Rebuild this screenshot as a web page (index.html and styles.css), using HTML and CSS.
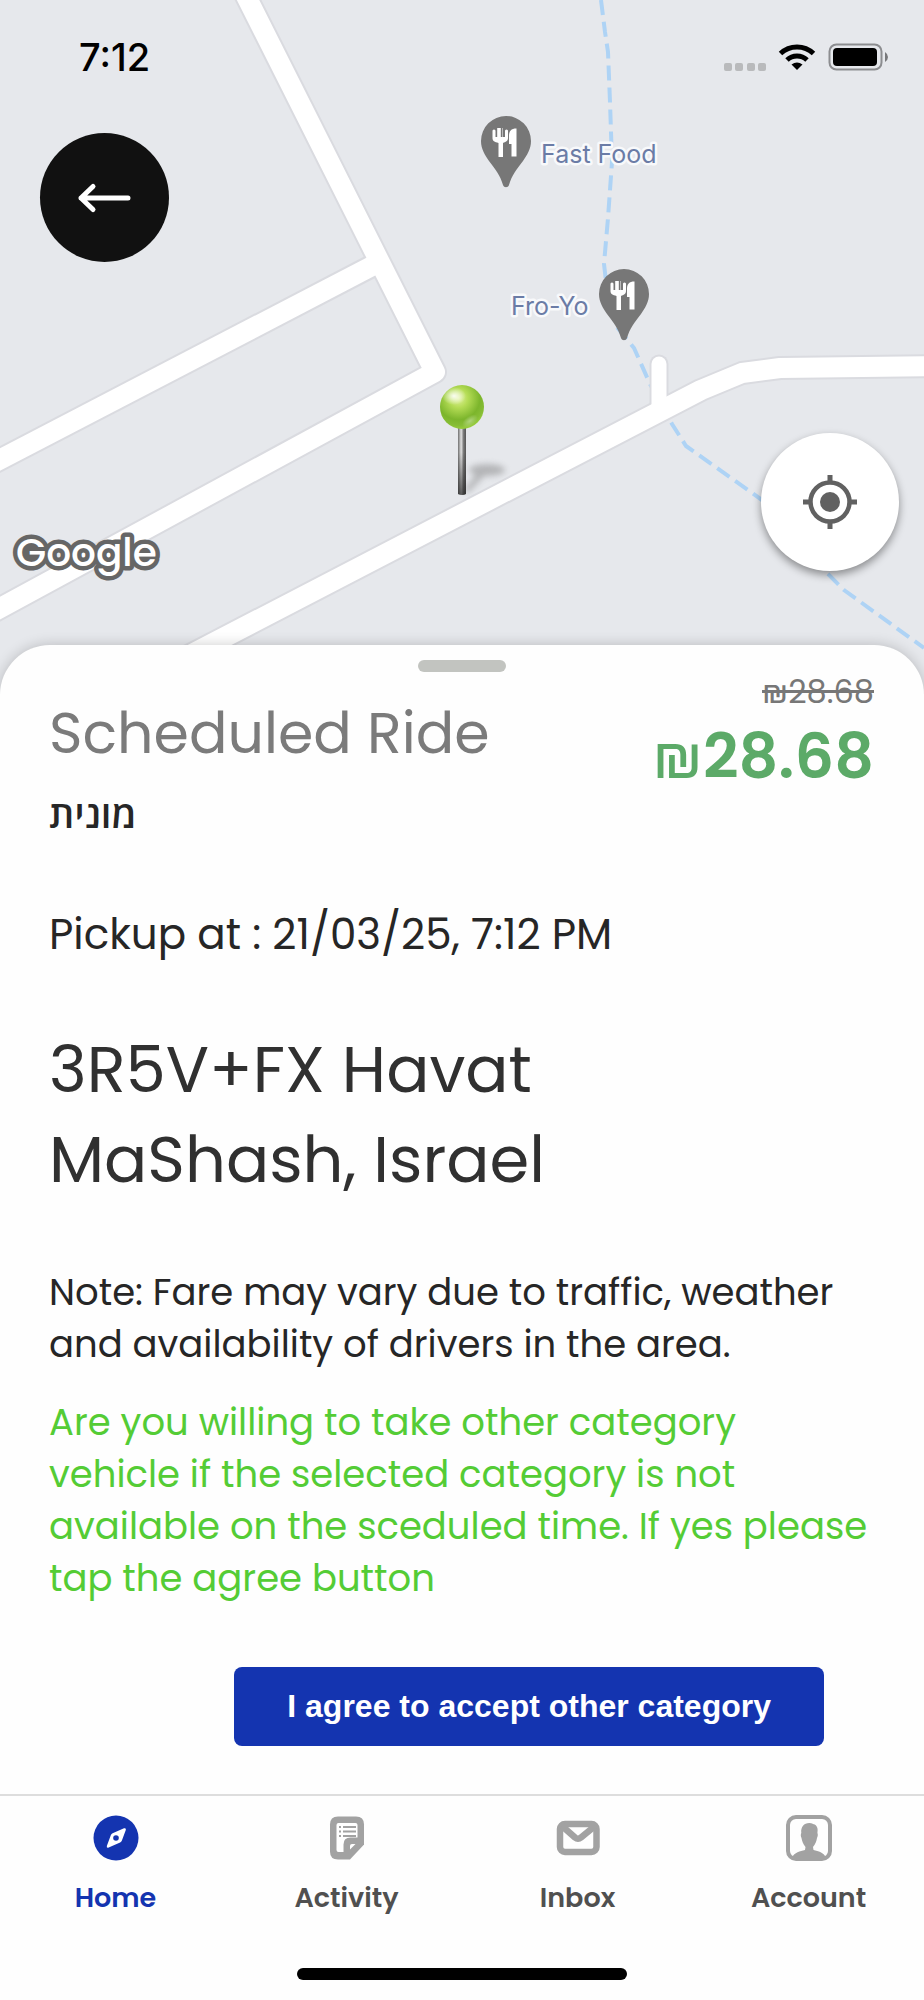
FILE: index.html
```html
<!DOCTYPE html>
<html lang="en">
<head>
<meta charset="utf-8">
<meta name="viewport" content="width=device-width, initial-scale=1">
<title>Scheduled Ride</title>
<link rel="stylesheet" href="styles.css">
</head>
<body>
<div class="screen">
  <section class="map" aria-label="Map">
    <svg class="map-canvas" viewBox="0 0 924 694" aria-hidden="true">
      <defs>
        <radialGradient id="ball" cx="0.42" cy="0.3" r="0.72">
          <stop offset="0" stop-color="#dff19a"/>
          <stop offset="0.3" stop-color="#b4dc55"/>
          <stop offset="0.68" stop-color="#7cb52c"/>
          <stop offset="0.86" stop-color="#86bd35"/>
          <stop offset="1" stop-color="#9bd03f"/>
        </radialGradient>
        <radialGradient id="shine">
          <stop offset="0" stop-color="#ffffff" stop-opacity="0.9"/>
          <stop offset="1" stop-color="#ffffff" stop-opacity="0"/>
        </radialGradient>
        <linearGradient id="shaft">
          <stop offset="0" stop-color="#6f6f6f"/>
          <stop offset="0.4" stop-color="#e2e2e2"/>
          <stop offset="0.7" stop-color="#777777"/>
          <stop offset="1" stop-color="#555555"/>
        </linearGradient>
        <linearGradient id="shaft-dark" x1="0" y1="0" x2="0" y2="1">
          <stop offset="0.4" stop-color="#222222" stop-opacity="0"/>
          <stop offset="1" stop-color="#222222" stop-opacity="0.7"/>
        </linearGradient>
        <filter id="soft" x="-50%" y="-50%" width="200%" height="200%"><feGaussianBlur stdDeviation="3"/></filter>
        <g id="food">
          <path fill="#777777" d="M0-25a25 25 0 0 1 25 25c0 8-4 14-8 20C10 29 6 34 3 44c-1 3-5 3-6 0C-6 34-10 29-17 20c-4-6-8-12-8-20A25 25 0 0 1 0-25z"/>
          <path fill="#ffffff" d="M-13.500-10.500q1.500-2 3 0V-4h1.700v-9h3.600v9h1.700v-9h.5v9H-1v-6.500q1.500-2 3 0V-3c0 3-2.500 4-5 5v14h-4.500V2c-4-1-6-2-6-5zM10.500-12.500v28h-5V3H3v-8c0-5 2-7.500 7.500-7.500z"/>
        </g>
      </defs>
      <path class="river" d="M601 0l4 32 3 20 2 50 2 60-4 56-4 46 3 26 9 36 18 22 16 36 22 40 14 22 76 54 64 72 18 18 80 58"/>
      <g class="road-edge">
        <path class="road" d="M238-20L435 372L-20 619"/>
        <path class="road" d="M-20 470L374 265"/>
        <path class="road" d="M90 707L701 390L742 373L780 368L944 366"/>
        <path class="road lane" d="M659 364V405"/>
      </g>
      <g class="road-fill">
        <path class="road" d="M238-20L435 372L-20 619"/>
        <path class="road" d="M-20 470L374 265"/>
        <path class="road" d="M90 707L701 390L742 373L780 368L944 366"/>
        <path class="road lane" d="M659 364V405"/>
      </g>
      <use href="#food" x="506" y="141"/>
      <use href="#food" x="624" y="294"/>
      <text class="place" x="541" y="163">Fast Food</text>
      <text class="place" x="511" y="315">Fro-Yo</text>
      <g filter="url(#soft)" fill="#777777" opacity="0.45">
        <ellipse cx="487" cy="470" rx="18" ry="6"/>
        <path d="M464 490l14-18 8 2-18 19z"/>
      </g>
      <path fill="url(#shaft)" d="M458 424h8v70q-4 2-8 0z"/>
      <path fill="url(#shaft-dark)" d="M458 424h8v70q-4 2-8 0z"/>
      <circle cx="462" cy="407" r="22" fill="url(#ball)"/>
      <ellipse cx="454" cy="396" rx="12" ry="9" fill="url(#shine)"/>
      <ellipse cx="470" cy="421" rx="9" ry="5" fill="url(#shine)" opacity="0.4" transform="rotate(-35 470 421)"/>
      <text class="brand" x="16" y="566">Google</text>
    </svg>

    <header class="status-bar">
      <span class="clock">7:12</span>
      <svg class="status-icons" width="168" height="30" viewBox="0 0 168 30" aria-hidden="true">
        <g fill="#b9babc">
          <rect x="1" y="21" width="8" height="8" rx="2"/>
          <rect x="12" y="21" width="8" height="8" rx="2"/>
          <rect x="24" y="21" width="8" height="8" rx="2"/>
          <rect x="35" y="21" width="8" height="8" rx="2"/>
        </g>
        <g fill="none" stroke="#000000" stroke-width="5">
          <path d="M57.500 11.500a24 24 0 0 1 33 0"/>
          <path d="M64 18a14.500 14.500 0 0 1 20 0"/>
        </g>
        <path d="M68.500 22.500q5.500-4 11 0L74 28z"/>
        <rect x="106.500" y="2.500" width="52" height="25" rx="7" fill="none" stroke="#8c8d90" stroke-width="2"/>
        <rect x="110" y="6" width="44" height="18" rx="4"/>
        <path fill="#77787a" d="M162 10q3 2 3 5t-3 5z"/>
      </svg>
    </header>

    <button class="round back" type="button" aria-label="Back">
      <svg width="56" height="32" viewBox="0 0 56 32" fill="none" stroke="#ffffff" stroke-width="5" stroke-linecap="round" stroke-linejoin="round"><path d="M51 16H4M16 4.500L4 16l12 11.500"/></svg>
    </button>
    <button class="round locate" type="button" aria-label="My location">
      <svg width="56" height="56" viewBox="0 0 56 56"><circle cx="28" cy="28" r="19.500" fill="none" stroke="#616161" stroke-width="4.500"/><circle cx="28" cy="28" r="10" fill="#616161"/><path d="M28 1v8M28 47v8M1 28h8M47 28h8" stroke="#616161" stroke-width="5"/></svg>
    </button>
  </section>

  <main class="sheet">
    <div class="handle"></div>
    <div class="summary">
      <div class="ride">
        <h1 class="title">Scheduled Ride</h1>
        <p class="vehicle" lang="he">מונית</p>
      </div>
      <div class="fare">
        <del class="old-price">₪28.68</del>
        <strong class="price"><span class="currency">₪</span>28.68</strong>
      </div>
    </div>
    <p class="pickup">Pickup at : 21/03/25, 7:12 PM</p>
    <h2 class="address">3R5V+FX Havat<br>MaShash, Israel</h2>
    <p class="note">Note: Fare may vary due to traffic, weather<br>and availability of drivers in the area.</p>
    <p class="note question">Are you willing to take other category<br>vehicle if the selected category is not<br>available on the sceduled time. If yes please<br>tap the agree button</p>
    <button class="agree" type="button">I agree to accept other category</button>
  </main>

  <nav class="tabs">
    <a class="tab active" href="#home">
      <svg width="48" height="48" viewBox="0 0 48 48"><circle cx="24" cy="24" r="22.500" fill="#1434b0"/><path fill="#ffffff" d="M32 14.300q2.400-.7 1.800 1.800l-4 10.600q-.5 1.300-1.700 1.800l-11.400 5q-2.500.8-1.800-1.800l4-10.600q.5-1.300 1.700-1.800z"/><circle cx="24" cy="24" r="2.800" fill="#1434b0"/></svg>
      <span>Home</span>
    </a>
    <a class="tab" href="#activity">
      <svg width="48" height="48" viewBox="0 0 48 48"><path fill="#a2a2a2" d="M15 2.500h18q8 0 8 8v20L27 45.500H15q-8 0-8-8v-27q0-8 8-8z"/><path fill="#ffffff" d="M15.500 9h17q2 0 2 2v12.500h-7q-7 0-7 7V38h-5q-2 0-2-2V11q0-2 2-2z"/><path d="M16 13h2M20 13h13M16 17.500h2M20 17.500h13M16 22h2M20 22h13" stroke="#a2a2a2" stroke-width="1.800"/><path fill="#ffffff" d="M27 35.500V32q0-2 2-2h3.500z"/></svg>
      <span>Activity</span>
    </a>
    <a class="tab" href="#inbox">
      <svg width="48" height="48" viewBox="0 0 48 48" fill="none" stroke="#a2a2a2" stroke-width="6.500"><rect x="6" y="10" width="36.500" height="28" rx="5"/><path d="M8 12l13 11.500q3 2.500 6 0L41 12"/></svg>
      <span>Inbox</span>
    </a>
    <a class="tab" href="#account">
      <svg width="48" height="48" viewBox="0 0 48 48"><rect x="3" y="3" width="42" height="42" rx="8" fill="none" stroke="#a2a2a2" stroke-width="4"/><path fill="#a2a2a2" d="M20 36l.5-3c-2.500-3-3.500-6-4-9-1-2-.8-4-.2-5-.7-6 2.700-10 8-10 3 0 4 1.500 5.500 1.500 3 2 3.200 5 2.600 8.500.6 1 .6 3-.4 5-.5 3-1.500 6-4 9l.5 3c5 1 10 2.500 12.500 7.500l-2 2H9l-2-2c2.500-5 8-6.500 13-7.500z"/></svg>
      <span>Account</span>
    </a>
  </nav>
  <div class="home-indicator"></div>
</div>
</body>
</html>
```
FILE: styles.css
```css
* {
  box-sizing: border-box;
}

body {
  margin: 0;
  background: #fefefe;
  color: #262626;
  font-family: Poppins, Inter, "Noto Sans", sans-serif;
}

h1,
h2,
p {
  margin: 0;
  font-weight: 400;
}

button {
  border: 0;
  cursor: pointer;
}

.screen {
  display: flex;
  flex-direction: column;
  min-height: 100vh;
}

/* Map */
.map {
  position: relative;
  background: #e6e8ec;
}

.map-canvas {
  display: block;
  width: 100%;
  height: auto;
}

.road {
  fill: none;
  stroke-width: 20px;
  stroke-linejoin: round;
  stroke-linecap: butt;
}

.lane {
  stroke-width: 15px;
  stroke-linecap: round;
}

.road-fill {
  stroke: #ffffff;
}

.road-edge {
  stroke: #dadbe0;
}

.road-edge .road {
  stroke-width: 24px;
}

.road-edge .lane {
  stroke-width: 19px;
}

.river {
  fill: none;
  stroke: #aed3f5;
  stroke-width: 4px;
  stroke-dasharray: 15 7;
}

.place {
  font: 400 25px Inter, sans-serif;
  fill: #6b7ca6;
  stroke: #f8f9fb;
  stroke-width: 5px;
  stroke-linejoin: round;
  paint-order: stroke;
}

.brand {
  font: 500 39px Poppins, Lato, sans-serif;
  fill: #ffffff;
  stroke: #666666;
  stroke-width: 9px;
  stroke-linejoin: round;
  paint-order: stroke;
}

.status-bar {
  position: absolute;
  inset: 0 0 auto;
  display: flex;
  align-items: center;
  justify-content: space-between;
  height: 113px;
  padding: 0 33px 0 79px;
}

.clock {
  color: #000000;
  font: 500 38px Inter, sans-serif;
}

.round {
  position: absolute;
  display: flex;
  align-items: center;
  justify-content: center;
  padding: 0;
  border-radius: 50%;
}

.back {
  top: 133px;
  left: 40px;
  width: 129px;
  height: 129px;
  background: #111111;
}

.locate {
  right: 25px;
  bottom: 123px;
  width: 138px;
  height: 138px;
  background: #ffffff;
  box-shadow: 0 4px 8px rgba(0, 0, 0, 0.4);
}

/* Ride details */
.sheet {
  position: relative;
  display: flex;
  flex: 1;
  flex-direction: column;
  margin-top: -49px;
  padding: 15px 50px 47px 49px;
  border-radius: 50px 50px 0 0;
  background: #fefefe;
  box-shadow: 0 0 14px rgba(0, 0, 0, 0.2);
}

.handle {
  align-self: center;
  width: 88px;
  height: 12px;
  border-radius: 6px;
  background: #c2c4c0;
}

.summary {
  display: flex;
  justify-content: space-between;
}

.ride {
  padding-top: 21px;
}

.title {
  color: #7b7b7b;
  font-size: 57px;
  line-height: 80px;
}

.vehicle {
  font-family: "Open Sans", "DejaVu Sans", sans-serif;
  font-size: 38px;
  font-weight: 600;
  line-height: 80px;
}

.fare {
  display: flex;
  flex-direction: column;
  align-items: flex-end;
}

.old-price {
  color: #777777;
  font-size: 32px;
  line-height: 40px;
}

.price {
  color: #5caa68;
  font-size: 62px;
  font-weight: 600;
  line-height: 90px;
}

.currency {
  font-weight: 400;
}

.pickup {
  margin-top: 52px;
  font-size: 42px;
  line-height: 60px;
}

.address {
  margin-top: 60px;
  color: #303030;
  font-size: 64px;
  line-height: 90px;
}

.note {
  margin-top: 61px;
  font-size: 37px;
  line-height: 52px;
}

.question {
  margin-top: 26px;
  color: #54cc35;
}

.agree {
  align-self: flex-end;
  margin-top: 63px;
  margin-right: 50px;
  padding: 0 53px;
  border-radius: 8px;
  background: #1434b0;
  color: #ffffff;
  font: 700 32px/79px "Liberation Sans", Arial, sans-serif;
}

/* Bottom navigation */
.tabs {
  position: relative;
  display: grid;
  grid-template-columns: repeat(4, 1fr);
  border-top: 2px solid #dddddd;
  padding: 18px 0 50px;
  background: #fefefe;
}

.tab {
  display: flex;
  flex-direction: column;
  align-items: center;
  gap: 16px;
  color: #505050;
  font-size: 27px;
  font-weight: 600;
  line-height: 40px;
  text-decoration: none;
}

.tab.active {
  color: #1434b0;
}

.home-indicator {
  position: relative;
  align-self: center;
  width: 330px;
  height: 12px;
  margin-bottom: 20px;
  border-radius: 6px;
  background: #000000;
}
```
